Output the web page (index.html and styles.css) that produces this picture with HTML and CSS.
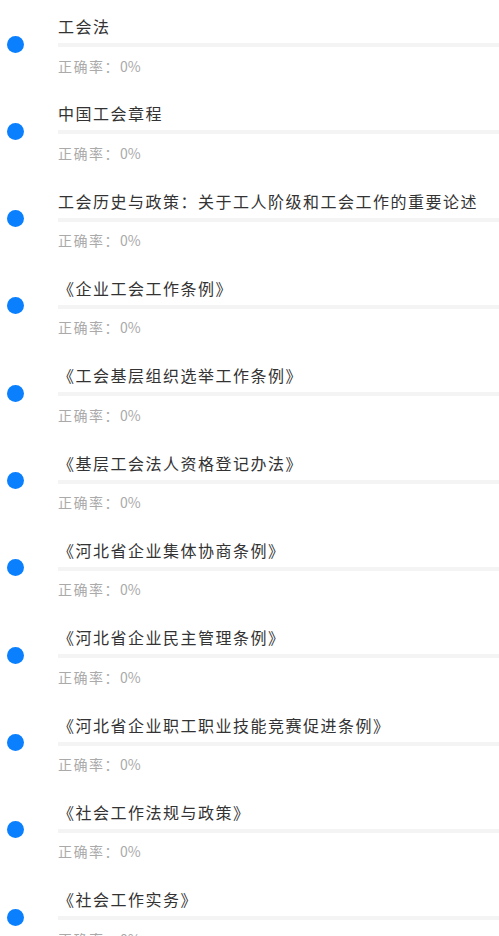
FILE: index.html
```html
<!DOCTYPE html>
<html lang="zh-CN">
<head>
  <meta charset="UTF-8" />
  <meta name="viewport" content="width=device-width, initial-scale=1.0" />
  <title>章节练习</title>
  <link rel="stylesheet" href="styles.css">
</head>
<body>
  <ul class="chapters" id="chapterList"></ul>

  <script>
    const chapters = [
      "工会法",
      "中国工会章程",
      "工会历史与政策：关于工人阶级和工会工作的重要论述",
      "《企业工会工作条例》",
      "《工会基层组织选举工作条例》",
      "《基层工会法人资格登记办法》",
      "《河北省企业集体协商条例》",
      "《河北省企业民主管理条例》",
      "《河北省企业职工职业技能竞赛促进条例》",
      "《社会工作法规与政策》",
      "《社会工作实务》"
    ];

    const list = document.getElementById("chapterList");

    chapters.forEach(name => {
      const li = document.createElement('li');
      li.className = 'chapter';
      li.innerHTML = `
        <span class="dot"></span>
        <div class="info">
          <div class="title">${name}</div>
          <div class="bar"><div class="bar-fill" style="width: 0%"></div></div>
          <div class="rate">正确率：<span class="num">0%</span></div>
        </div>
      `;
      list.appendChild(li);
    });
  </script>
</body>
</html>
```

FILE: styles.css
```css
body { margin: 0; padding: 0; background: #fff; font-family: "Noto Sans CJK SC", "Noto Sans", sans-serif; }
.chapters { list-style: none; margin: 0; padding: 0; }
.chapter { display: flex; align-items: flex-start; height: 87.33px; box-sizing: border-box; padding-top: 15px; }
.dot { flex: none; width: 17px; height: 17px; border-radius: 50%; background: #0a80ff; margin: 20.5px 0 0 7px; }
.info { flex: 1; margin-left: 34px; }
.title { font-size: 16px; line-height: 22px; letter-spacing: 1.5px; color: #333; white-space: nowrap; }
.bar { height: 4px; background: #f4f4f4; margin-top: 6px; }
.bar-fill { height: 100%; background: #0a80ff; }
.rate { font-size: 14px; line-height: 20px; letter-spacing: 1.5px; color: #aaa; margin-top: 8.5px; }
.rate .num { letter-spacing: 0; }
```
